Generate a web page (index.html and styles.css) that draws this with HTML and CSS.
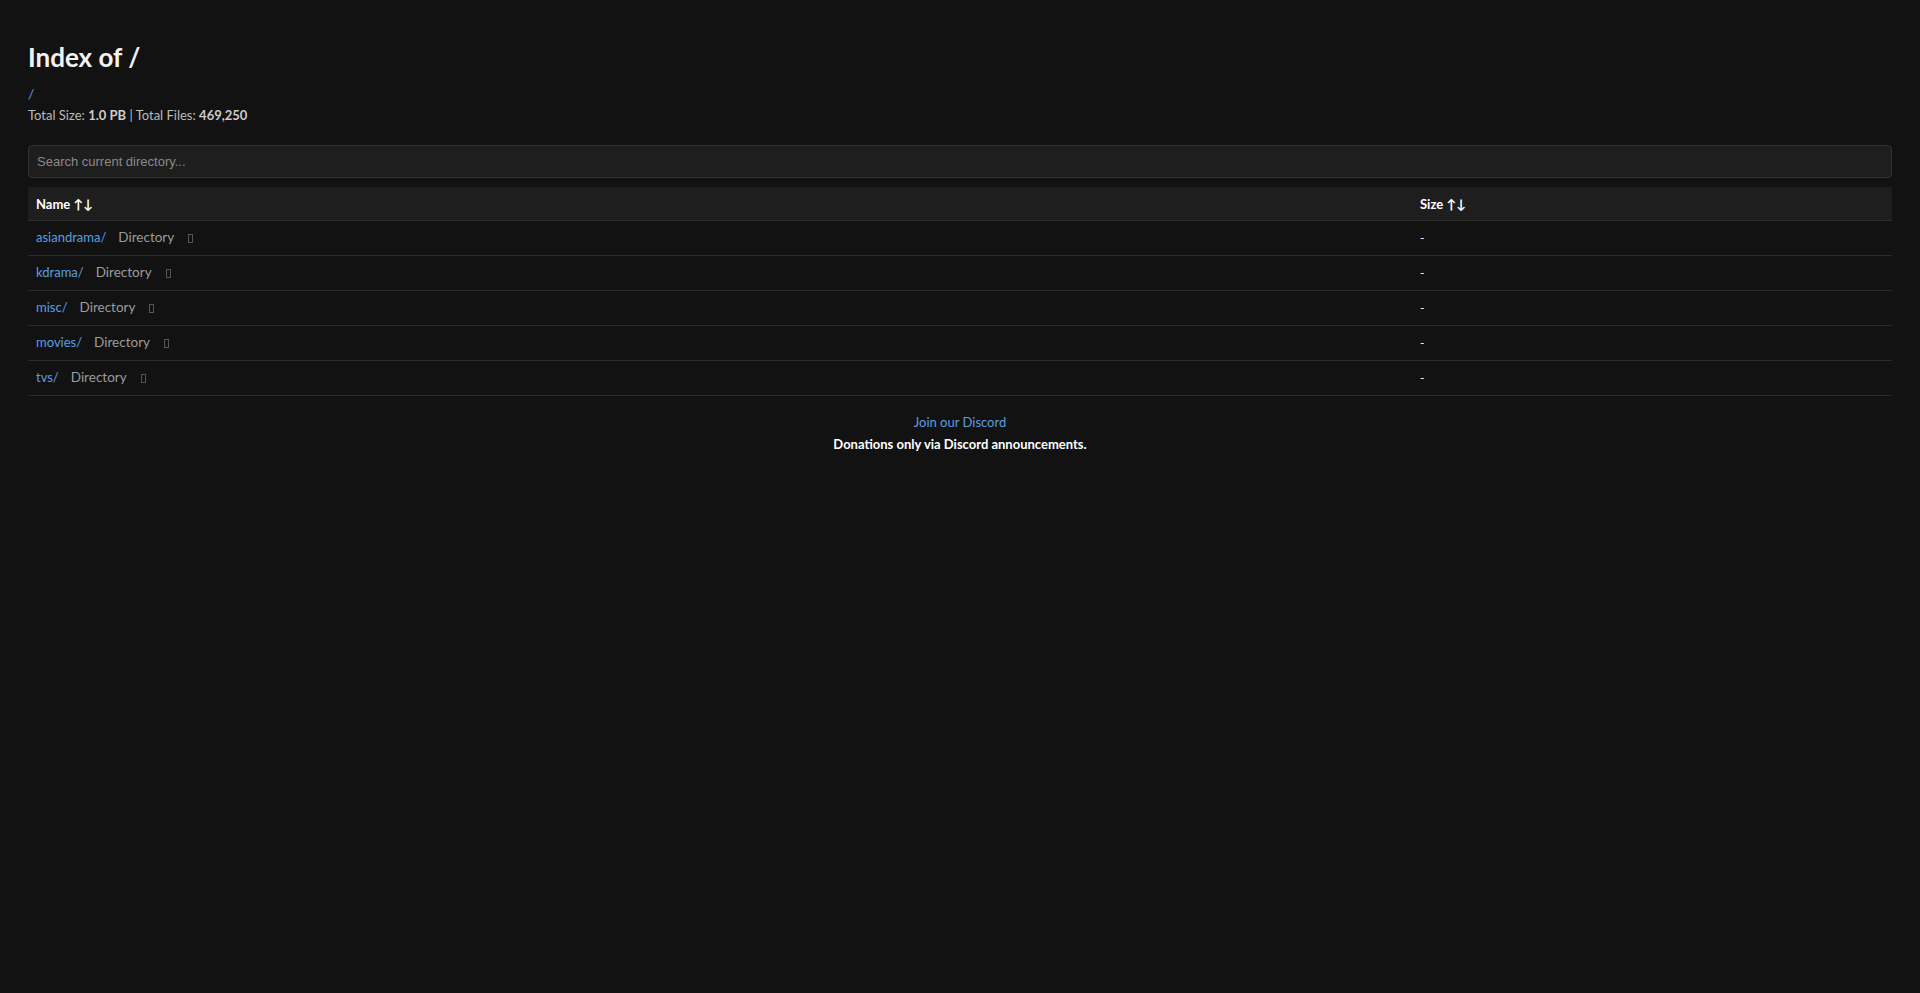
FILE: index.html
```html
<!DOCTYPE html>
<html lang="en">
<head>
    <meta charset="UTF-8">
    <meta name="viewport" content="width=device-width, initial-scale=1.0">
    <title>Index of /</title>
    <link rel="stylesheet" href="styles.css">
</head>
<body>
    <div class="container">
        <h1>Index of /</h1>

        <!-- breadcrumb -->
        <div class="breadcrumb">
            <a href="/">/</a>
        </div>
        <div class="stats">
            Total Size: <b>1.0 PB</b> | Total Files: <b>469,250</b>
        </div>

        <input type="text" class="search" placeholder="Search current directory...">

        <table class="listing">
            <thead>
                <tr>
                    <th class="col-name">Name &#8593;&#8595;</th>
                    <th>Size &#8593;&#8595;</th>
                </tr>
            </thead>
            <tbody>
                <tr>
                    <td><a href="asiandrama/">asiandrama/</a><span class="type">Directory</span><span class="tofu"></span></td>
                    <td>-</td>
                </tr>
                <tr>
                    <td><a href="kdrama/">kdrama/</a><span class="type">Directory</span><span class="tofu"></span></td>
                    <td>-</td>
                </tr>
                <tr>
                    <td><a href="misc/">misc/</a><span class="type">Directory</span><span class="tofu"></span></td>
                    <td>-</td>
                </tr>
                <tr>
                    <td><a href="movies/">movies/</a><span class="type">Directory</span><span class="tofu"></span></td>
                    <td>-</td>
                </tr>
                <tr>
                    <td><a href="tvs/">tvs/</a><span class="type">Directory</span><span class="tofu"></span></td>
                    <td>-</td>
                </tr>
            </tbody>
        </table>

        <div class="footer">
            <a href="#">Join our Discord</a>
            <p>Donations only via Discord announcements.</p>
        </div>
    </div>
</body>
</html>
```

FILE: styles.css
```css
body {
    font-family: Lato, "Open Sans", sans-serif;
    background-color: #121212;
    color: #e0e0e0;
    margin: 0;
    padding: 0;
    font-size: 13px;
}

a {
    color: #5a9fe0;
    text-decoration: none;
}

.container {
    padding: 28px;
}

h1 {
    font-size: 26px;
    font-weight: bold;
    color: #f2f2f2;
    margin: 13px 0 12px 0;
}

.breadcrumb {
    font-size: 14px;
    margin-bottom: 5px;
}

.stats {
    color: #bbb;
    margin-bottom: 22px;
}

.stats b {
    color: #ccc;
}

.search {
    display: block;
    box-sizing: border-box;
    width: 100%;
    height: 33px;
    padding: 6px 8px;
    background-color: #1e1e1e;
    border: 1px solid #333;
    border-radius: 4px;
    color: #ddd;
    font-family: "Liberation Sans", Arial, sans-serif;
    font-size: 13px;
    margin-bottom: 9px;
}

.search::placeholder {
    color: #8a8a8a;
}

.listing {
    width: 100%;
    border-collapse: collapse;
}

.listing th {
    background-color: #1e1e1e;
    text-align: left;
    color: #fff;
    font-weight: bold;
    padding: 9px 8px 8px 8px;
    height: 16px;
    border-bottom: 1px solid #2e2e2e;
}

.col-name {
    width: 74.25%;
}

.listing td {
    padding: 7px 8px 9px 8px;
    height: 18px;
    border-bottom: 1px solid #2a2a2a;
    color: #fff;
    font-size: 12px;
}

.listing td a {
    font-size: 13px;
}

.type {
    color: #9c9c9c;
    font-size: 13.5px;
    margin-left: 12px;
}

.tofu {
    display: inline-block;
    width: 3px;
    height: 7px;
    border: 1px solid #555;
    margin-left: 14px;
    vertical-align: -1px;
}

.footer {
    text-align: center;
    margin-top: 18px;
}

.footer a {
    font-size: 13px;
}

.footer p {
    margin: 6px 0 0 0;
    font-weight: bold;
    color: #fff;
}
```
